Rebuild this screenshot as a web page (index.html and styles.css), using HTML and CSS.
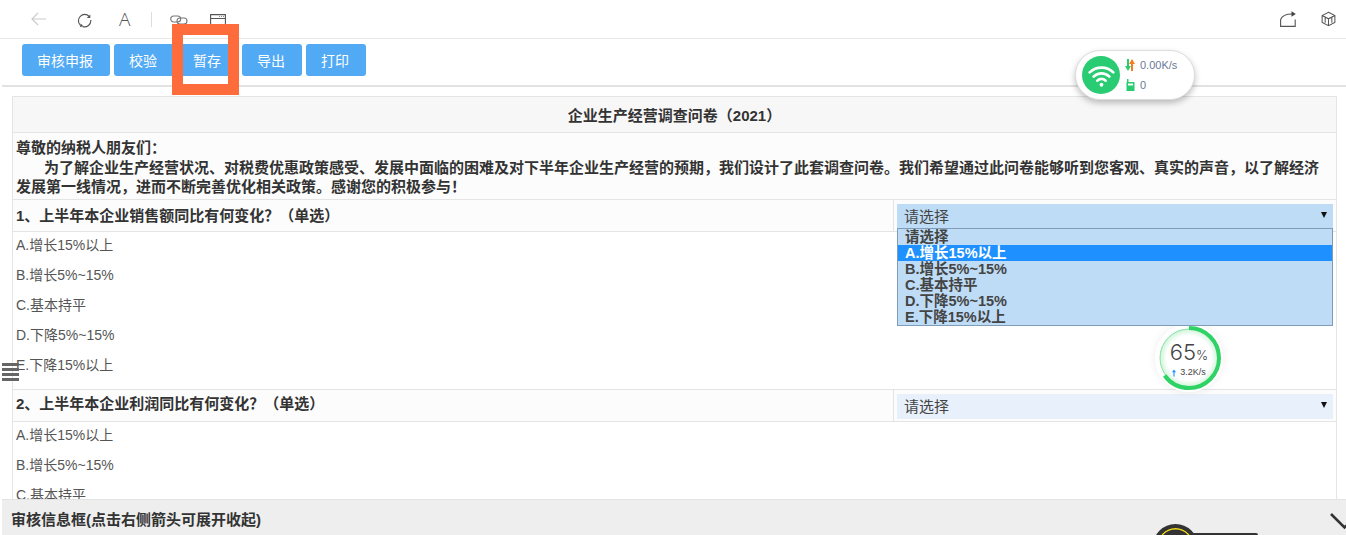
FILE: index.html
```html
<!DOCTYPE html>
<html lang="zh-CN">
<head>
    <meta charset="UTF-8">
    <meta name="viewport" content="width=device-width, initial-scale=1.0">
    <title>企业生产经营调查问卷</title>
    <link rel="stylesheet" href="styles.css">
</head>
<body>
    <div class="toolbar">
        <div class="tool-group">
            <svg class="tool tool-back" viewBox="0 0 15 14"><path d="M15 7H1M7 1 1 7l6 6" fill="none" stroke="#ccc" stroke-width="1.2"/></svg>
            <svg class="tool tool-refresh" viewBox="0 0 16 16"><path d="M13 3.500A6.700 6.700 0 1 0 3.500 13M6 14.500A6.700 6.700 0 0 0 14.700 7.500" fill="none" stroke="#555" stroke-width="1.200"/><path d="M14.200 1.500v3.800h-3.800zM3 15l1-3.800 2.800 2.800z" fill="#555"/></svg>
            <span class="tool-font">A</span>
            <span class="tool-sep"></span>
            <svg class="tool tool-link" viewBox="0 0 18 10"><rect x=".7" y="1" width="10" height="6" rx="3" fill="none" stroke="#777" stroke-width="1.100"/><rect x="7" y="3" width="10" height="6" rx="3" fill="none" stroke="#777" stroke-width="1.100"/></svg>
            <svg class="tool tool-window" viewBox="0 0 16 14"><path d="M.6.6h14.800v13H.6zM.6 4.500h14.800" fill="none" stroke="#555" stroke-width="1.100"/><path d="M9 2.500h5" stroke="#888" stroke-width="1" stroke-dasharray="1 1"/></svg>
        </div>
        <div class="tool-group">
            <svg class="tool tool-share" viewBox="0 0 16 16"><path d="M.6 8.500v6.900h14.600V8.500M.6 8.500C2 5 6 3 12 3" fill="none" stroke="#555" stroke-width="1.100"/><path d="M11.500 .2l4.300 2.800-4.300 2.800z" fill="#444"/></svg>
            <svg class="tool tool-cube" viewBox="0 0 16 16"><path d="M8 .8l6.800 3.500v7.400L8 15.200l-6.800-3.500V4.300zM1.200 4.300 8 7.800l6.800-3.500M8 7.800v7.400M4.500 6l-.1 6M11.500 6l.1 6" fill="none" stroke="#555" stroke-width="1.100"/></svg>
        </div>
    </div>

    <div class="actions">
        <button class="btn btn-wide">审核申报</button>
        <button class="btn">校验</button>
        <button class="btn">暂存</button>
        <button class="btn">导出</button>
        <button class="btn">打印</button>
    </div>

    <div class="content">
        <table class="survey">
            <colgroup>
                <col class="col-question">
                <col>
            </colgroup>
            <tr>
                <td colspan="2" class="survey-title">企业生产经营调查问卷（2021）</td>
            </tr>
            <tr>
                <td colspan="2" class="survey-intro">
                    尊敬的纳税人朋友们：<br>
                    <span class="indent">为了解企业生产经营状况、对税费优惠政策感受、发展中面临的困难及对下半年企业生产经营的预期，我们设计了此套调查问卷。我们希望通过此问卷能够听到您客观、真实的声音，以了解经济发展第一线情况，进而不断完善优化相关政策。感谢您的积极参与！</span>
                </td>
            </tr>
            <tr class="row-question">
                <td class="question">1、上半年本企业销售额同比有何变化？（单选）</td>
                <td class="answer">
                    <div class="picker picker-open">请选择<span class="caret"></span></div>
                    <ul class="picker-list">
                        <li>请选择</li>
                        <li class="active">A.增长15%以上</li>
                        <li>B.增长5%~15%</li>
                        <li>C.基本持平</li>
                        <li>D.下降5%~15%</li>
                        <li>E.下降15%以上</li>
                    </ul>
                </td>
            </tr>
            <tr>
                <td colspan="2" class="options">
                    <p>A.增长15%以上</p>
                    <p>B.增长5%~15%</p>
                    <p>C.基本持平</p>
                    <p>D.下降5%~15%</p>
                    <p>E.下降15%以上</p>
                </td>
            </tr>
            <tr class="row-question">
                <td class="question question-high">2、上半年本企业利润同比有何变化？（单选）</td>
                <td class="answer">
                    <div class="picker">请选择<span class="caret"></span></div>
                </td>
            </tr>
            <tr>
                <td colspan="2" class="options">
                    <p>A.增长15%以上</p>
                    <p>B.增长5%~15%</p>
                    <p>C.基本持平</p>
                </td>
            </tr>
        </table>
    </div>

    <div class="review-bar">
        <span>审核信息框(点击右侧箭头可展开收起)</span>
        <svg class="review-arrow" viewBox="0 0 16 16"><path d="M1 1 14.500 14.500 20 9" fill="none" stroke="#333" stroke-width="2.600"/></svg>
    </div>

    <!-- floating widgets and the annotation frame -->
    <div class="highlight-frame"></div>

    <div class="net-pill">
        <div class="net-wifi">
            <svg viewBox="0 0 24 20"><path d="M1.500 7.200a15 15 0 0 1 21 0M5 11a10 10 0 0 1 14 0M8.400 14.600a5 5 0 0 1 7.200 0" fill="none" stroke="#fff" stroke-width="2.400" stroke-linecap="round"/><circle cx="12" cy="18.200" r="1.700" fill="#fff"/></svg>
        </div>
        <div class="net-stats">
            <div class="net-line">
                <svg viewBox="0 0 10 12"><path d="M3 0v8" stroke="#29cc72" stroke-width="2"/><path d="M0 7h6l-3 5z" fill="#29cc72"/><path d="M7 4v8" stroke="#f57c1f" stroke-width="2"/><path d="M4 5h6L7 0z" fill="#f57c1f"/></svg>
                0.00K/s
            </div>
            <div class="net-line">
                <svg viewBox="0 0 10 12"><path d="M2 0h1.500v3H9.500v9H1.500V3H2z" fill="#29cc72"/><path d="M3 4.500h5v2H3z" fill="#fff"/></svg>
                0
            </div>
        </div>
    </div>

    <div class="speed-ring">
        <svg class="speed-arc" viewBox="0 0 64 64"><circle cx="32" cy="32" r="29" fill="none" stroke="#8fe3a8" stroke-width="1"/><circle cx="32" cy="32" r="30" fill="none" stroke="#2fd264" stroke-width="4" stroke-dasharray="122.500 66" transform="rotate(-90 32 32)"/></svg>
        <div class="speed-value">65<small>%</small></div>
        <div class="speed-rate">
            <svg viewBox="0 0 5 9"><path d="M2.500 0 5 3.500H3.200V9H1.800V3.500H0z" fill="#1e90ff"/></svg>
            3.2K/s
        </div>
    </div>

    <div class="side-menu"><i></i><i></i><i></i><i></i></div>

    <div class="dock">
        <div class="dock-ball"></div>
        <div class="dock-tail"></div>
    </div>
</body>
</html>
```

FILE: styles.css
```css
html, body {
    height: 100%;
}
body {
    margin: 0;
    display: flex;
    flex-direction: column;
    overflow: hidden;
    background-color: #fff;
    color: #333;
    font-family: "Liberation Sans", "Noto Sans CJK SC", sans-serif;
    font-size: 14px;
}
.toolbar {
    height: 38px;
    flex: none;
    display: flex;
    justify-content: space-between;
    align-items: center;
    padding: 0 10px 0 31px;
    border-bottom: 1px solid #e8e8e8;
}
.tool-group {
    display: flex;
    align-items: center;
}
.tool {
    display: block;
}
.tool-back {
    width: 15px;
    height: 14px;
    margin-right: 31px;
}
.tool-refresh {
    width: 15px;
    height: 15px;
    margin: 3px 27px 0 0;
}
.tool-font {
    width: 12px;
    font-family: "Open Sans", sans-serif;
    font-weight: 300;
    font-size: 19px;
    line-height: 20px;
    color: #555;
    margin-right: 20px;
}
.tool-sep {
    width: 1px;
    height: 15px;
    background-color: #ddd;
    margin: 1px 18px 0 0;
}
.tool-link {
    width: 18px;
    height: 10px;
    margin: 2px 22px 0 0;
}
.tool-window {
    width: 16px;
    height: 14px;
    margin-top: 4px;
}
.tool-share {
    width: 16px;
    height: 16px;
    margin-right: 25px;
}
.tool-cube {
    width: 15px;
    height: 16px;
}
.actions {
    height: 48px;
    flex: none;
    box-sizing: border-box;
    display: flex;
    gap: 4px;
    padding: 5px 0 0 20px;
    margin-left: 2px;
    border-bottom: 2px solid #e2e2e2;
}
.btn {
    width: 60px;
    height: 32px;
    padding: 0 2px 0 0;
    border: none;
    border-radius: 3px;
    background-color: #52aaf5;
    color: #fff;
    font-family: inherit;
    font-size: 14px;
}
.btn-wide {
    width: 88px;
}
.content {
    flex: 1;
    min-height: 0;
    overflow: hidden;
    padding: 9px 9px 0 12px;
}
.survey {
    width: 100%;
    table-layout: fixed;
    border-collapse: collapse;
    border: 1px solid #e4e4e4;
}
.col-question {
    width: 881px;
}
.survey td {
    border: 1px solid #e4e4e4;
    padding: 0;
}
.survey-title {
    height: 35px;
    background-color: #f7f7f7;
    text-align: center;
    font-weight: bold;
    font-size: 15px;
}
.survey-intro {
    height: 67px;
    box-sizing: border-box;
    background-color: #fcfcfc;
    font-weight: bold;
    font-size: 15px;
    line-height: 19.5px;
    padding: 3px 6px 0 3px !important;
}
.indent {
    margin-left: 28px;
}
.row-question td {
    height: 29px;
    background-color: #fcfcfc;
}
.survey .question {
    font-weight: bold;
    font-size: 15px;
    padding: 0 0 2px 3px;
}
.row-question .question-high {
    height: 25px;
    padding-bottom: 6px;
}
.survey .answer {
    position: relative;
    padding: 0 3px;
}
.picker {
    position: relative;
    height: 25px;
    line-height: 25px;
    margin-top: 1px;
    padding-left: 7px;
    background-color: #e8f1fb;
    color: #444;
    font-size: 15px;
}
.picker-open {
    background-color: #bedcf6;
}
.caret {
    position: absolute;
    right: 6px;
    top: 8px;
    border-style: solid;
    border-width: 6px 3.5px 0;
    border-color: #111 transparent transparent;
}
.picker-list {
    position: absolute;
    z-index: 2;
    left: 3px;
    right: 3px;
    top: 28px;
    margin: 0;
    padding: 0;
    list-style: none;
    background-color: #bedcf6;
    border: 1px solid #7f9db9;
    font-weight: bold;
    font-size: 14.5px;
    color: #444;
}
.picker-list li {
    height: 16px;
    line-height: 16px;
    padding-left: 7px;
    white-space: nowrap;
}
.picker-list .active {
    background-color: #1e90ff;
    color: #fff;
}
.options {
    padding: 0 0 7px 3px !important;
    color: #555;
}
.options p {
    margin: 0;
    height: 30px;
    line-height: 26px;
}
.review-bar {
    height: 36px;
    flex: none;
    box-sizing: border-box;
    margin-left: 2px;
    padding: 10px 0 0 9px;
    display: flex;
    justify-content: space-between;
    background-color: #eee;
    border-top: 1px solid #e3e3e3;
    font-weight: bold;
    line-height: 20px;
    font-size: 15px;
}
.review-arrow {
    width: 16px;
    height: 16px;
    margin-top: 3px;
    overflow: visible;
}
.highlight-frame {
    position: absolute;
    left: 172px;
    top: 24px;
    width: 45px;
    height: 49px;
    border: 11px solid #ff6c3c;
}
.net-pill {
    position: absolute;
    left: 1075px;
    top: 50px;
    width: 120px;
    height: 50px;
    box-sizing: border-box;
    display: flex;
    align-items: center;
    gap: 5px;
    padding-left: 6px;
    background-color: #fff;
    border: 1px solid #ddd;
    border-radius: 25px;
    box-shadow: 0 3px 6px rgba(0, 0, 0, 0.25);
}
.net-wifi {
    width: 38px;
    height: 38px;
    flex: none;
    display: flex;
    align-items: center;
    justify-content: center;
    border-radius: 50%;
    background-color: #29cc72;
}
.net-wifi svg {
    width: 27px;
    height: 23px;
}
.net-line {
    display: flex;
    align-items: center;
    gap: 5px;
    height: 20px;
    font-size: 11px;
    color: #6b7a99;
}
.net-line svg {
    width: 10px;
    height: 12px;
}
.speed-ring {
    position: absolute;
    left: 1155px;
    top: 324px;
    width: 68px;
    height: 68px;
    box-sizing: border-box;
    padding-top: 16px;
    text-align: center;
    border-radius: 50%;
    background: radial-gradient(circle closest-side, #fff 66%, #cdf3d7 86%, #fff 87%);
    box-shadow: 0 0 8px rgba(0, 0, 0, 0.08);
}
.speed-arc {
    position: absolute;
    left: 2px;
    top: 2px;
    width: 64px;
    height: 64px;
}
.speed-value {
    font-family: Inter, sans-serif;
    font-weight: 300;
    font-size: 22px;
    line-height: 24px;
    color: #444;
}
.speed-value small {
    font-size: 13px;
}
.speed-rate {
    display: flex;
    justify-content: center;
    align-items: center;
    gap: 4px;
    font-size: 9px;
    line-height: 11px;
    color: #444;
}
.speed-rate svg {
    width: 4px;
    height: 8px;
}
.side-menu {
    position: absolute;
    left: 2px;
    top: 363px;
    width: 17px;
}
.side-menu i {
    display: block;
    height: 3px;
    margin-bottom: 2px;
    background-color: #666;
}
.dock-ball {
    position: absolute;
    left: 1153px;
    top: 524px;
    width: 37px;
    height: 37px;
    border: 4px solid #333;
    border-radius: 50%;
    background-color: #333;
    box-shadow: inset 0 0 0 1.5px #f2dc1a;
}
.dock-tail {
    position: absolute;
    left: 1190px;
    top: 533px;
    width: 68px;
    height: 2px;
    border-radius: 2px 2px 0 0;
    background-color: #333;
}
```
